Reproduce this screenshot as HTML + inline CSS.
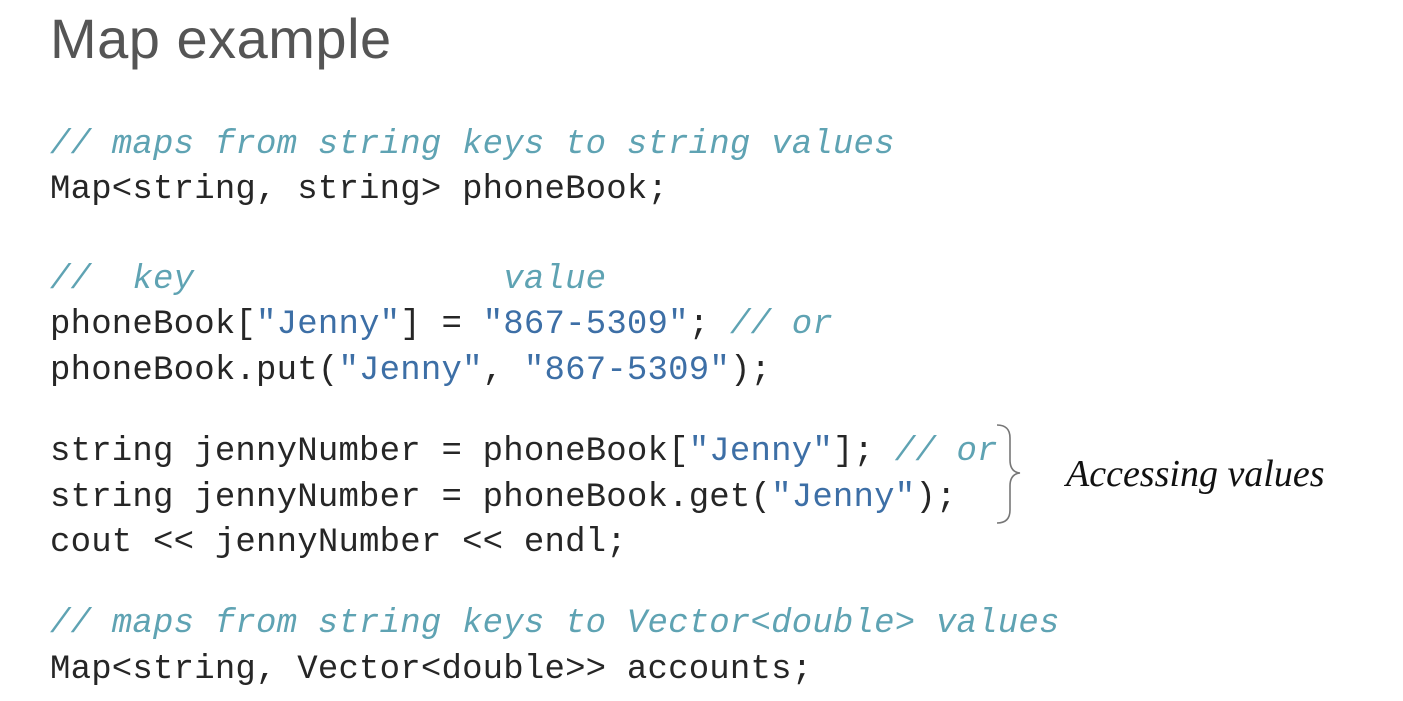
<!DOCTYPE html>
<html><head><meta charset="utf-8"><style>
body{margin:0;width:1403px;height:701px;background:#fff;position:relative;overflow:hidden}
.t{position:absolute;left:50px;top:6px;font:56px "Liberation Sans",sans-serif;color:#555;letter-spacing:0.5px}
.l{position:absolute;left:50px;font:34px/40px "Liberation Mono",monospace;color:#262626;white-space:pre;letter-spacing:0.2px}
.c{color:#5fa3b3;font-style:italic}
.s{color:#3d6fa6}
.h{position:absolute;left:1066px;top:452px;font:italic 38px "Liberation Serif",serif;color:#111}
</style></head><body>
<div class="t">Map example</div>
<div class="l c" style="top:125px">// maps from string keys to string values</div>
<div class="l" style="top:170px">Map&lt;string, string&gt; phoneBook;</div>
<div class="l c" style="top:260px">//  key               value</div>
<div class="l" style="top:305px">phoneBook[<span class="s">"Jenny"</span>] = <span class="s">"867-5309"</span>; <span class="c">// or</span></div>
<div class="l" style="top:351px">phoneBook.put(<span class="s">"Jenny"</span>, <span class="s">"867-5309"</span>);</div>
<div class="l" style="top:432px">string jennyNumber = phoneBook[<span class="s">"Jenny"</span>]; <span class="c">// or</span></div>
<div class="l" style="top:478px">string jennyNumber = phoneBook.get(<span class="s">"Jenny"</span>);</div>
<div class="l" style="top:523px">cout &lt;&lt; jennyNumber &lt;&lt; endl;</div>
<div class="l c" style="top:604px">// maps from string keys to Vector&lt;double&gt; values</div>
<div class="l" style="top:650px">Map&lt;string, Vector&lt;double&gt;&gt; accounts;</div>
<svg style="position:absolute;left:990px;top:420px" width="50" height="110"><path d="M7 5 Q20 5 20 18 L20 40 Q20 52 30 53 Q20 54 20 66 L20 90 Q20 103 7 103" fill="none" stroke="#777" stroke-width="1.6"/></svg>
<div class="h">Accessing values</div>
</body></html>
